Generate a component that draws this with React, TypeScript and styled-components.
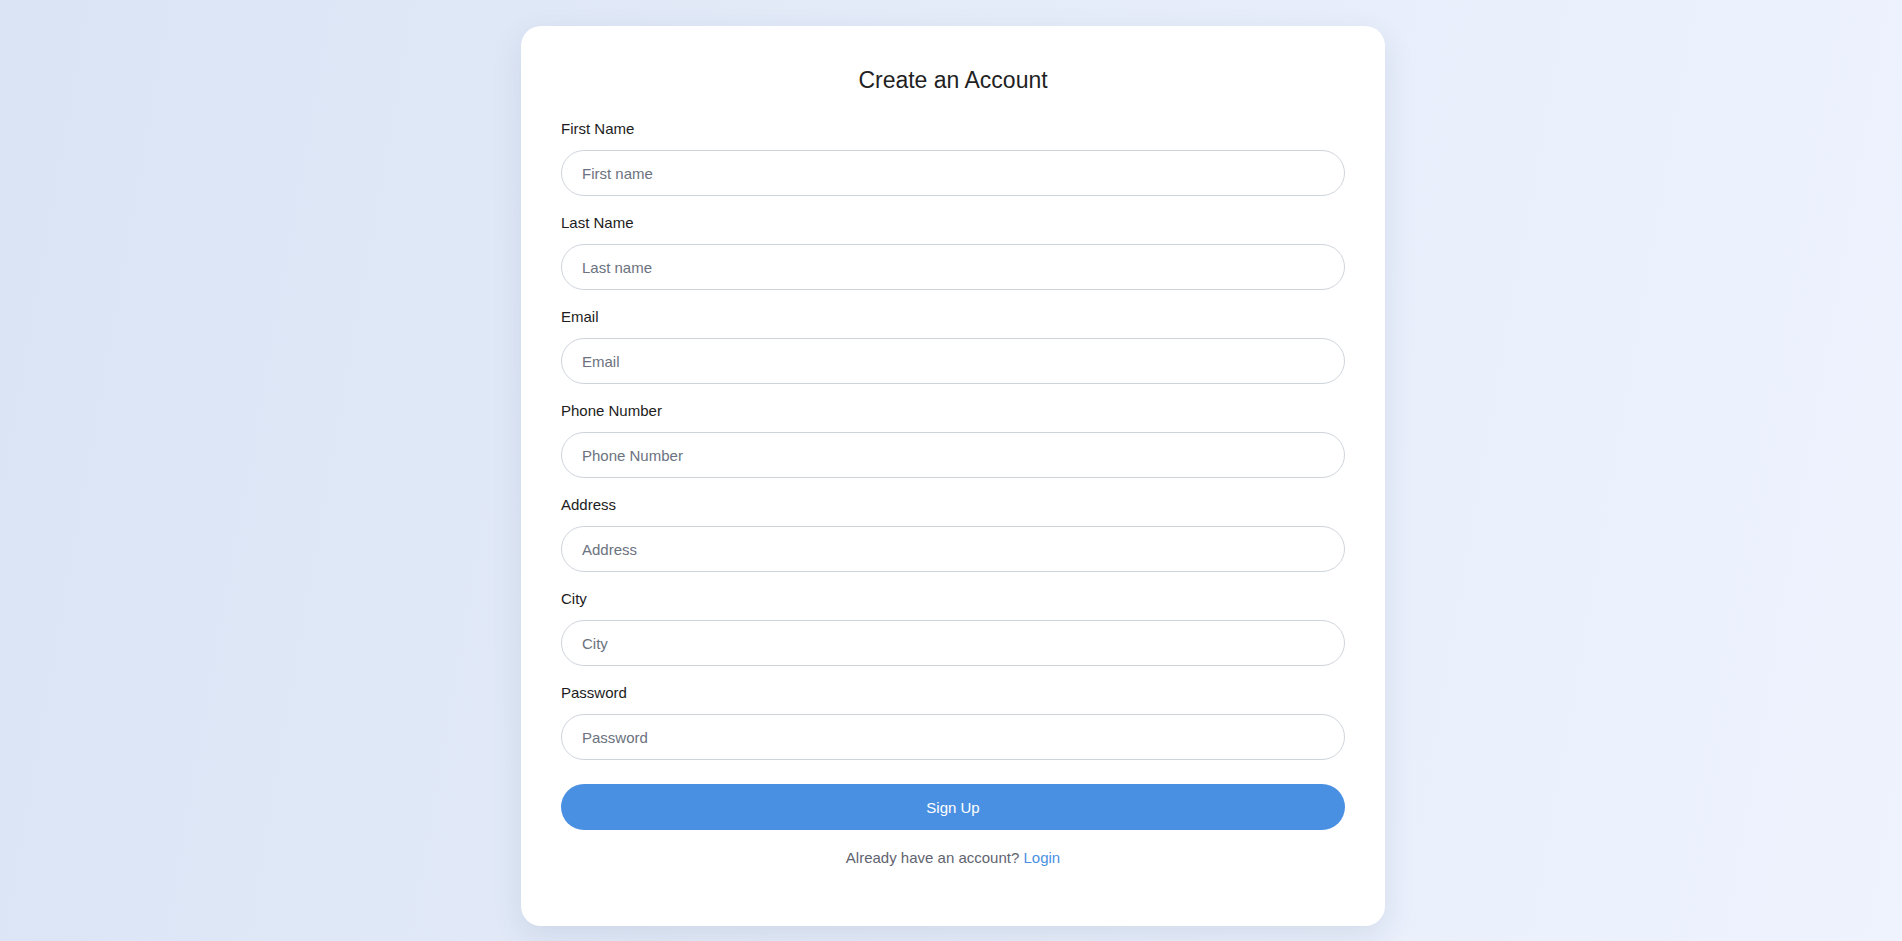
import styled, { createGlobalStyle } from 'styled-components'

// ─── Data ────────────────────────────────────────────────────────────────────
const FIELDS = [
  { label: 'First Name', placeholder: 'First name', type: 'text' },
  { label: 'Last Name', placeholder: 'Last name', type: 'text' },
  { label: 'Email', placeholder: 'Email', type: 'email' },
  { label: 'Phone Number', placeholder: 'Phone Number', type: 'tel' },
  { label: 'Address', placeholder: 'Address', type: 'text' },
  { label: 'City', placeholder: 'City', type: 'text' },
  { label: 'Password', placeholder: 'Password', type: 'password' },
]

// ─── Component ───────────────────────────────────────────────────────────────
const App = () => (
  <>
    <GlobalStyle />
    <Page>
      <Card>
        <Title>Create an Account</Title>
        <Form onSubmit={(e) => e.preventDefault()}>
          {FIELDS.map(({ label, placeholder, type }) => (
            <Field key={label}>
              <Label>{label}</Label>
              <Input type={type} placeholder={placeholder} />
            </Field>
          ))}
          <SubmitButton type="submit">Sign Up</SubmitButton>
        </Form>
        <Footer>
          Already have an account? <LoginLink href="#">Login</LoginLink>
        </Footer>
      </Card>
    </Page>
  </>
)

// ─── Styles ──────────────────────────────────────────────────────────────────

const GlobalStyle = createGlobalStyle`
  * { box-sizing: border-box; }
  html, body { margin: 0; padding: 0; }
  body {
    font-family: "Liberation Sans", Arial, sans-serif;
    background: linear-gradient(100deg, #dae4f5 0%, #e5ecf9 50%, #eef3fe 100%);
    min-height: 100vh;
  }
`

const Page = styled.main`
  display: flex;
  justify-content: center;
  align-items: flex-start;
  min-height: 100vh;
  padding: 26px 0 15px 4px;
`

const Card = styled.div`
  width: 864px;
  background: #ffffff;
  border-radius: 20px;
  padding: 40px 40px 60px;
  box-shadow: 0 10px 30px rgba(60, 80, 120, 0.12);
`

const Title = styled.h2`
  margin: 0 0 26px;
  text-align: center;
  font-size: 23px;
  line-height: 28px;
  font-weight: 400;
  color: #1f1f24;
`

const Form = styled.form`
  display: flex;
  flex-direction: column;
`

const Field = styled.div`
  display: flex;
  flex-direction: column;
  gap: 13px;
  margin-bottom: 18px;
`

const Label = styled.label`
  font-size: 15px;
  color: #1c1c22;
  line-height: 17px;
`

const Input = styled.input`
  height: 46px;
  width: 100%;
  padding: 0 20px;
  border: 1px solid #cfd4dc;
  border-radius: 23px;
  font-family: inherit;
  font-size: 15px;
  color: #222;
  background: #fff;
  outline: none;

  &::placeholder { color: #6b7280; }
`

const SubmitButton = styled.button`
  margin-top: 6px;
  height: 46px;
  width: 100%;
  border: none;
  border-radius: 23px;
  background: #4a90e2;
  color: #ffffff;
  font-family: inherit;
  font-size: 15px;
  cursor: pointer;
`

const Footer = styled.p`
  margin: 19px 0 0;
  text-align: center;
  font-size: 15px;
  line-height: 17px;
  color: #5f6470;
`

const LoginLink = styled.a`
  color: #4a90e2;
  text-decoration: none;
`

export default App
